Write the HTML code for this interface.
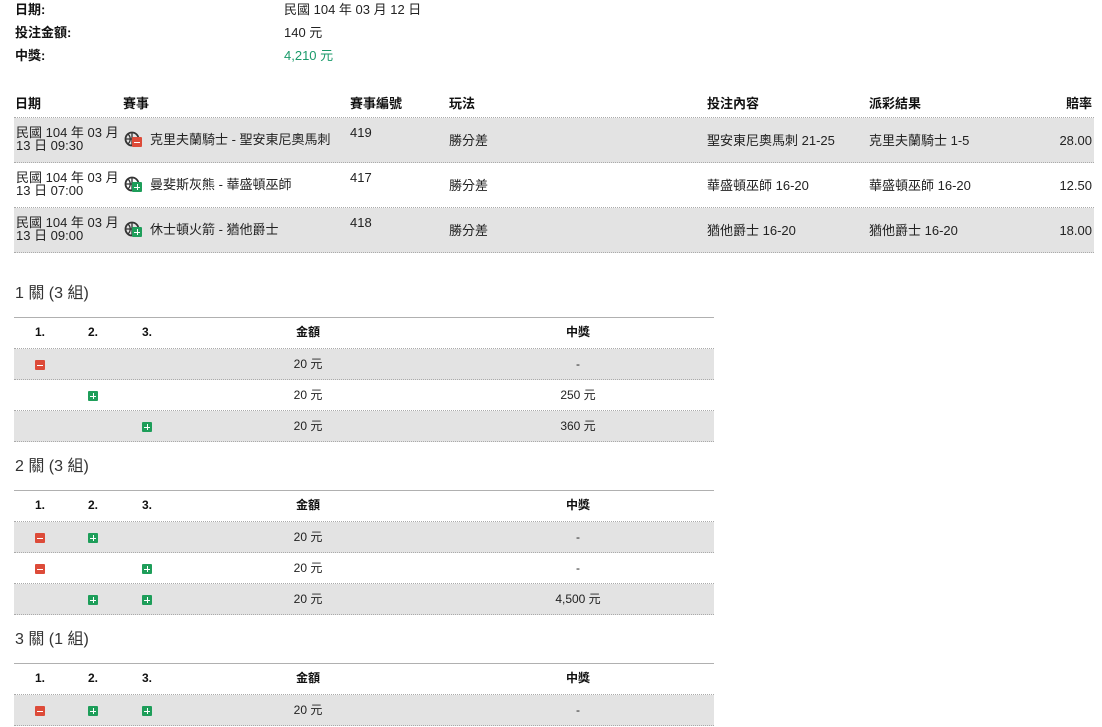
<!DOCTYPE html>
<html><head><meta charset="utf-8"><style>
body{margin:0;width:1102px;height:727px;background:#fff;position:relative;overflow:hidden;font-family:"Liberation Sans","Noto Sans CJK TC",sans-serif;color:#222;font-size:13px;line-height:15px}
.a{position:absolute;white-space:nowrap;line-height:15px}
.b{font-weight:bold;color:#111}
.row{position:absolute;border-bottom:1px dotted #aaa;box-sizing:border-box}
.g{background:#e3e3e3}
.ic{position:absolute;width:10px;height:10px;border-radius:1px}
.r{background:#dd4b39}.gr{background:#1e9e5a}
.ic::before{content:"";position:absolute;left:2px;top:4.5px;width:6px;height:1px;background:#fff}
.gr::after{content:"";position:absolute;left:4.5px;top:2px;width:1px;height:6px;background:#fff}
.c{position:absolute;transform:translateX(-50%);white-space:nowrap;font-size:12px;line-height:15px}
.bb{position:absolute;width:16px;height:16px}
.t{position:absolute;left:15px;font-size:16px;line-height:18px;color:#333;white-space:nowrap}
</style></head><body>
<div class="a b" style="left:15px;top:2px">日期:</div>
<div class="a b" style="left:15px;top:25px">投注金額:</div>
<div class="a b" style="left:15px;top:48px">中獎:</div>
<div class="a" style="left:284px;top:2px">民國 104 年 03 月 12 日</div>
<div class="a" style="left:284px;top:25px">140 元</div>
<div class="a" style="left:284px;top:48px;color:#1a9a6a">4,210 元</div>

<div class="row" style="left:14px;top:92px;width:1080px;height:26px"></div>
<div class="a b" style="left:15px;top:96px">日期</div>
<div class="a b" style="left:123px;top:96px">賽事</div>
<div class="a b" style="left:350px;top:96px">賽事編號</div>
<div class="a b" style="left:449px;top:96px">玩法</div>
<div class="a b" style="left:707px;top:96px">投注內容</div>
<div class="a b" style="left:869px;top:96px">派彩結果</div>
<div class="a b" style="right:10px;top:96px">賠率</div>

<div class="row g" style="left:14px;top:118px;width:1080px;height:45px"></div>
<div class="row" style="left:14px;top:163px;width:1080px;height:45px"></div>
<div class="row g" style="left:14px;top:208px;width:1080px;height:45px"></div>

<div class="a" style="left:16px;top:126px;line-height:13px">民國 104 年 03 月<br>13 日 09:30</div>
<div class="a" style="left:16px;top:171px;line-height:13px">民國 104 年 03 月<br>13 日 07:00</div>
<div class="a" style="left:16px;top:216px;line-height:13px">民國 104 年 03 月<br>13 日 09:00</div>

<svg class="bb" style="left:124px;top:131px" viewBox="0 0 16 16"><circle cx="8" cy="8" r="6.5" fill="none" stroke="#333" stroke-width="1.8"/><path d="M2 8h12M8 1.5v13M4 3c3 3 3 7 0 10" fill="none" stroke="#333" stroke-width="1.3"/></svg>
<div class="ic r" style="left:132px;top:137px"></div>
<svg class="bb" style="left:124px;top:176px" viewBox="0 0 16 16"><circle cx="8" cy="8" r="6.5" fill="none" stroke="#333" stroke-width="1.8"/><path d="M2 8h12M8 1.5v13M4 3c3 3 3 7 0 10" fill="none" stroke="#333" stroke-width="1.3"/></svg>
<div class="ic gr" style="left:132px;top:182px"></div>
<svg class="bb" style="left:124px;top:221px" viewBox="0 0 16 16"><circle cx="8" cy="8" r="6.5" fill="none" stroke="#333" stroke-width="1.8"/><path d="M2 8h12M8 1.5v13M4 3c3 3 3 7 0 10" fill="none" stroke="#333" stroke-width="1.3"/></svg>
<div class="ic gr" style="left:132px;top:227px"></div>

<div class="a" style="left:150px;top:132px">克里夫蘭騎士 - 聖安東尼奧馬刺</div>
<div class="a" style="left:150px;top:177px">曼斐斯灰熊 - 華盛頓巫師</div>
<div class="a" style="left:150px;top:222px">休士頓火箭 - 猶他爵士</div>
<div class="a" style="left:350px;top:125px">419</div>
<div class="a" style="left:350px;top:170px">417</div>
<div class="a" style="left:350px;top:215px">418</div>
<div class="a" style="left:449px;top:133px">勝分差</div>
<div class="a" style="left:449px;top:178px">勝分差</div>
<div class="a" style="left:449px;top:223px">勝分差</div>
<div class="a" style="left:707px;top:133px">聖安東尼奧馬刺 21-25</div>
<div class="a" style="left:707px;top:178px">華盛頓巫師 16-20</div>
<div class="a" style="left:707px;top:223px">猶他爵士 16-20</div>
<div class="a" style="left:869px;top:133px">克里夫蘭騎士 1-5</div>
<div class="a" style="left:869px;top:178px">華盛頓巫師 16-20</div>
<div class="a" style="left:869px;top:223px">猶他爵士 16-20</div>
<div class="a" style="right:10px;top:133px">28.00</div>
<div class="a" style="right:10px;top:178px">12.50</div>
<div class="a" style="right:10px;top:223px">18.00</div>

<!-- section 1 -->
<div class="t" style="top:285px">1 關 (3 組)</div>
<div class="a" style="left:14px;top:317px;width:700px;border-top:1px solid #b0b0b0"></div>
<div class="row" style="left:14px;top:318px;width:700px;height:31px"></div>
<div class="c b" style="left:40px;top:325px">1.</div><div class="c b" style="left:93px;top:325px">2.</div><div class="c b" style="left:147px;top:325px">3.</div><div class="c b" style="left:308px;top:325px">金額</div><div class="c b" style="left:578px;top:325px">中獎</div>
<div class="row g" style="left:14px;top:349px;width:700px;height:31px"></div>
<div class="row" style="left:14px;top:380px;width:700px;height:31px"></div>
<div class="row g" style="left:14px;top:411px;width:700px;height:31px"></div>
<div class="ic r" style="left:35px;top:360px"></div>
<div class="ic gr" style="left:88px;top:391px"></div>
<div class="ic gr" style="left:142px;top:422px"></div>
<div class="c" style="left:308px;top:357px">20 元</div><div class="c" style="left:578px;top:357px">-</div>
<div class="c" style="left:308px;top:388px">20 元</div><div class="c" style="left:578px;top:388px">250 元</div>
<div class="c" style="left:308px;top:419px">20 元</div><div class="c" style="left:578px;top:419px">360 元</div>

<!-- section 2 -->
<div class="t" style="top:458px">2 關 (3 組)</div>
<div class="a" style="left:14px;top:490px;width:700px;border-top:1px solid #b0b0b0"></div>
<div class="row" style="left:14px;top:491px;width:700px;height:31px"></div>
<div class="c b" style="left:40px;top:498px">1.</div><div class="c b" style="left:93px;top:498px">2.</div><div class="c b" style="left:147px;top:498px">3.</div><div class="c b" style="left:308px;top:498px">金額</div><div class="c b" style="left:578px;top:498px">中獎</div>
<div class="row g" style="left:14px;top:522px;width:700px;height:31px"></div>
<div class="row" style="left:14px;top:553px;width:700px;height:31px"></div>
<div class="row g" style="left:14px;top:584px;width:700px;height:31px"></div>
<div class="ic r" style="left:35px;top:533px"></div><div class="ic gr" style="left:88px;top:533px"></div>
<div class="ic r" style="left:35px;top:564px"></div><div class="ic gr" style="left:142px;top:564px"></div>
<div class="ic gr" style="left:88px;top:595px"></div><div class="ic gr" style="left:142px;top:595px"></div>
<div class="c" style="left:308px;top:530px">20 元</div><div class="c" style="left:578px;top:530px">-</div>
<div class="c" style="left:308px;top:561px">20 元</div><div class="c" style="left:578px;top:561px">-</div>
<div class="c" style="left:308px;top:592px">20 元</div><div class="c" style="left:578px;top:592px">4,500 元</div>

<!-- section 3 -->
<div class="t" style="top:631px">3 關 (1 組)</div>
<div class="a" style="left:14px;top:663px;width:700px;border-top:1px solid #b0b0b0"></div>
<div class="row" style="left:14px;top:664px;width:700px;height:31px"></div>
<div class="c b" style="left:40px;top:671px">1.</div><div class="c b" style="left:93px;top:671px">2.</div><div class="c b" style="left:147px;top:671px">3.</div><div class="c b" style="left:308px;top:671px">金額</div><div class="c b" style="left:578px;top:671px">中獎</div>
<div class="row g" style="left:14px;top:695px;width:700px;height:31px"></div>
<div class="ic r" style="left:35px;top:706px"></div><div class="ic gr" style="left:88px;top:706px"></div><div class="ic gr" style="left:142px;top:706px"></div>
<div class="c" style="left:308px;top:703px">20 元</div><div class="c" style="left:578px;top:703px">-</div>
</body></html>
